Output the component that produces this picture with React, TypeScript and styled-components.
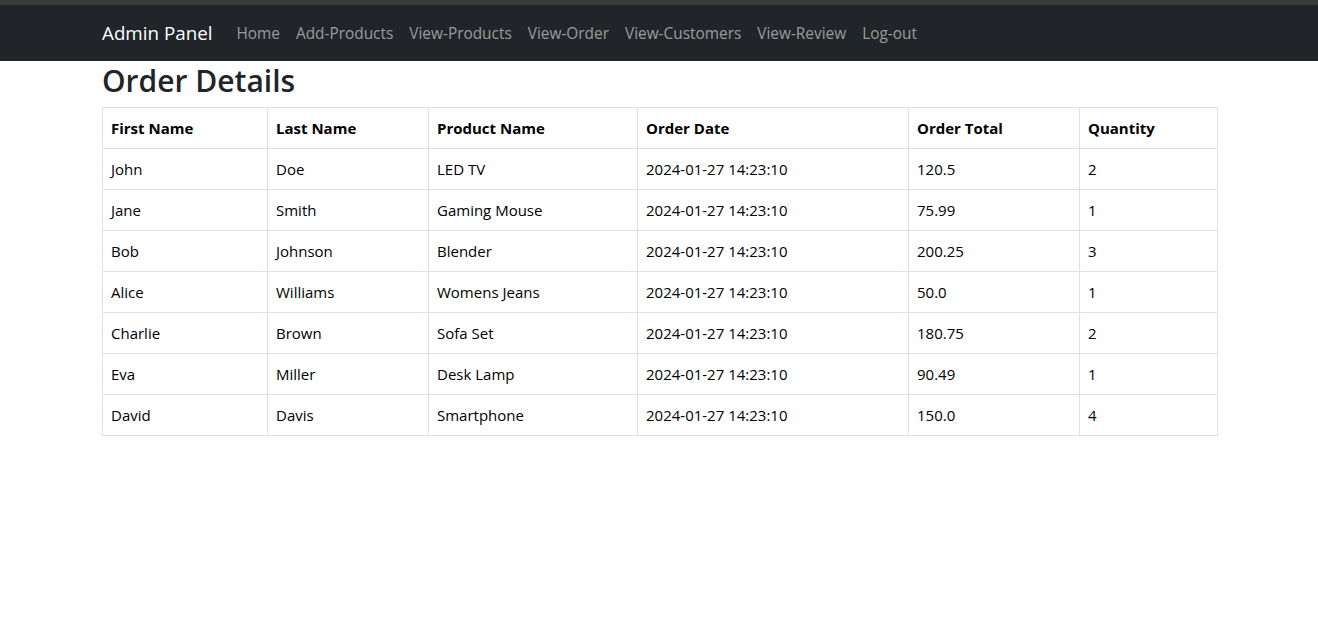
import React from "react";
import styled, { createGlobalStyle } from "styled-components";

const GlobalStyle = createGlobalStyle`
  html, body {
    margin: 0;
    padding: 0;
    background: #ffffff;
  }
  body {
    font-family: "Open Sans", "Noto Sans", "Liberation Sans", sans-serif;
    font-size: 16px;
    line-height: 1.5;
    color: #212529;
  }
  * { box-sizing: border-box; }
`;

const TopStrip = styled.div`
  height: 5px;
  background: #3c3c3c;
`;

const Navbar = styled.nav`
  background: #212529;
  height: 56px;
  display: flex;
  align-items: center;
`;

const Container = styled.div`
  width: 1140px;
  margin: 0 auto;
  padding: 0 12px 0 13px;
  display: flex;
  align-items: center;
`;

const Main = styled.main`
  width: 1140px;
  margin: 0 auto;
  padding: 0 12px 0 13px;
`;

const Brand = styled.a`
  color: #ffffff;
  font-size: 18.8px;
  margin-right: 16px;
  text-decoration: none;
  line-height: 30px;
  padding: 5px 0;
`;

const NavList = styled.ul`
  display: flex;
  list-style: none;
  margin: 0;
  padding: 0;
`;

const NavLink = styled.a`
  display: block;
  padding: 9px 8px 7px;
  color: rgba(255, 255, 255, 0.55);
  text-decoration: none;
  font-size: 15.4px;
  line-height: 24px;
`;

const Title = styled.h2`
  margin: 0 0 8px;
  font-size: 30px;
  font-weight: 600;
  line-height: 38.4px;
  color: #212529;
  padding-top: 1px;
`;

const Table = styled.table`
  width: 100%;
  border-collapse: collapse;
  table-layout: fixed;
  color: #000;
  margin-top: -1px;
`;

const Th = styled.th`
  border: 1px solid #dee2e6;
  padding: 8px;
  text-align: left;
  font-weight: 700;
  font-size: 15px;
  line-height: 24px;
`;

const Td = styled.td`
  border: 1px solid #dee2e6;
  padding: 8px;
  font-size: 15px;
  line-height: 24px;
`;

const links = [
  "Home",
  "Add-Products",
  "View-Products",
  "View-Order",
  "View-Customers",
  "View-Review",
  "Log-out",
];

const cols = [165, 161, 209, 271, 171, 138];
const headers = [
  "First Name",
  "Last Name",
  "Product Name",
  "Order Date",
  "Order Total",
  "Quantity",
];

const rows = [
  ["John", "Doe", "LED TV", "2024-01-27 14:23:10", "120.5", "2"],
  ["Jane", "Smith", "Gaming Mouse", "2024-01-27 14:23:10", "75.99", "1"],
  ["Bob", "Johnson", "Blender", "2024-01-27 14:23:10", "200.25", "3"],
  ["Alice", "Williams", "Womens Jeans", "2024-01-27 14:23:10", "50.0", "1"],
  ["Charlie", "Brown", "Sofa Set", "2024-01-27 14:23:10", "180.75", "2"],
  ["Eva", "Miller", "Desk Lamp", "2024-01-27 14:23:10", "90.49", "1"],
  ["David", "Davis", "Smartphone", "2024-01-27 14:23:10", "150.0", "4"],
];

export default function App() {
  return (
    <>
      <GlobalStyle />
      <TopStrip />
      <Navbar>
        <Container>
          <Brand href="#">Admin Panel</Brand>
          <NavList>
            {links.map((l) => (
              <li key={l}>
                <NavLink href="#">{l}</NavLink>
              </li>
            ))}
          </NavList>
        </Container>
      </Navbar>
      <Main>
        <Title>Order Details</Title>
        <Table>
          <colgroup>
            {cols.map((w, i) => (
              <col key={i} style={{ width: w }} />
            ))}
          </colgroup>
          <thead>
            <tr>
              {headers.map((h) => (
                <Th key={h}>{h}</Th>
              ))}
            </tr>
          </thead>
          <tbody>
            {rows.map((r, i) => (
              <tr key={i}>
                {r.map((c, j) => (
                  <Td key={j}>{c}</Td>
                ))}
              </tr>
            ))}
          </tbody>
        </Table>
      </Main>
    </>
  );
}
